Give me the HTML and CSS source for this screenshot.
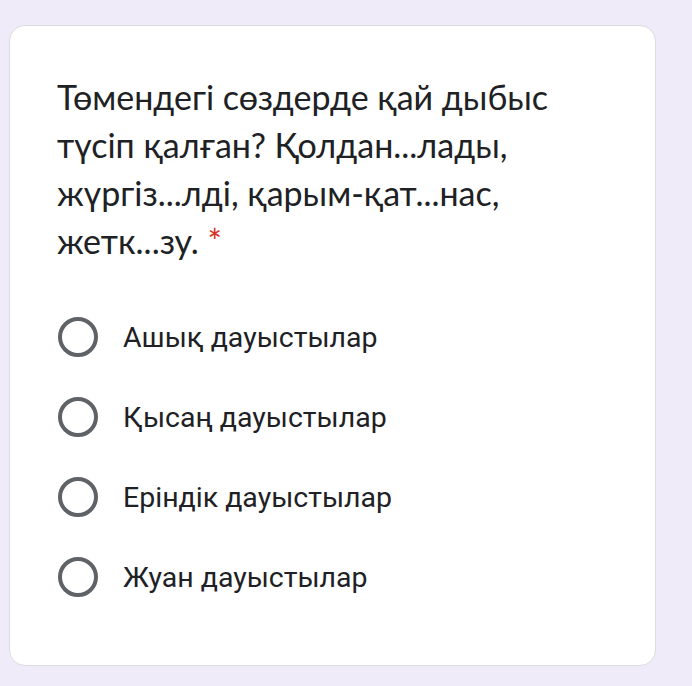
FILE: index.html
```html
<!DOCTYPE html>
<html lang="kk">
<head>
<meta charset="utf-8">
<link rel="stylesheet" href="styles.css">
</head>
<body>
<div class="card">
  <div class="question">Төмендегі сөздерде қай дыбыс<br>түсіп қалған? Қолдан...лады,<br>жүргіз...лді, қарым-қат...нас,<br>жетк...зу. <span class="req">*</span></div>
  <div class="options">
    <label class="option"><span class="radio"></span><span class="label">Ашық дауыстылар</span></label>
    <label class="option"><span class="radio"></span><span class="label">Қысаң дауыстылар</span></label>
    <label class="option"><span class="radio"></span><span class="label">Еріндік дауыстылар</span></label>
    <label class="option"><span class="radio"></span><span class="label">Жуан дауыстылар</span></label>
  </div>
</div>
</body>
</html>
```

FILE: styles.css
```css
html, body {
  margin: 0;
  padding: 0;
  background: #f0ebf8;
  width: 692px;
  height: 686px;
  overflow: hidden;
}
.card {
  box-sizing: border-box;
  margin: 25px 0 0 9px;
  width: 647px;
  height: 641px;
  background: #ffffff;
  border: 1px solid #dadce0;
  border-radius: 16px;
  padding: 47px 0 0 47px;
}
.question {
  font-family: "Lato", "Noto Sans", sans-serif;
  font-size: 34px;
  line-height: 48px;
  color: #202124;
}
.req {
  color: #d93025;
}
.options {
  display: flex;
  flex-direction: column;
  gap: 40px;
  margin-top: 52px;
}
.option {
  display: flex;
  align-items: center;
  height: 40px;
}
.radio {
  box-sizing: border-box;
  width: 40px;
  height: 40px;
  border: 4px solid #5f6368;
  border-radius: 50%;
  margin-left: 1px;
}
.label {
  margin-left: 25px;
  font-family: "Roboto", sans-serif;
  font-size: 28.5px;
  color: #202124;
}
```
